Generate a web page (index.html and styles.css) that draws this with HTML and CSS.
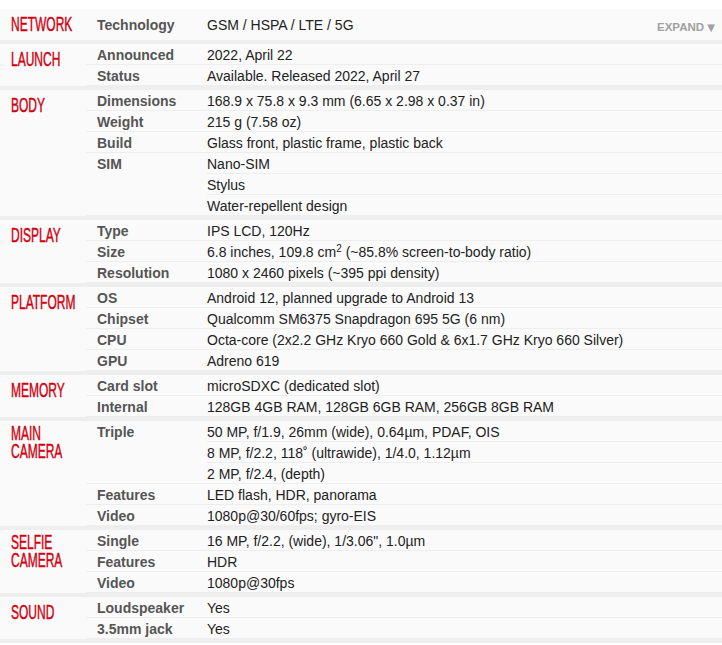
FILE: index.html
```html
<!DOCTYPE html>
<html lang="en">
<head>
<meta charset="utf-8">
<title>Specs</title>
<link rel="stylesheet" href="styles.css">
</head>
<body>
<div class="specs-list">
  <section class="sec net">
    <h2 class="ttl"><span>NETWORK</span></h2>
    <div class="rows">
      <div class="spec">
        <div class="lbl">Technology</div>
        <div class="vals"><div class="val">GSM / HSPA / LTE / 5G</div></div>
        <a class="expand">EXPAND <span class="arr">▼</span></a>
      </div>
    </div>
  </section>

  <section class="sec">
    <h2 class="ttl"><span>LAUNCH</span></h2>
    <div class="rows">
      <div class="spec"><div class="lbl">Announced</div><div class="vals"><div class="val">2022, April 22</div></div></div>
      <div class="spec"><div class="lbl">Status</div><div class="vals"><div class="val">Available. Released 2022, April 27</div></div></div>
    </div>
  </section>

  <section class="sec">
    <h2 class="ttl"><span>BODY</span></h2>
    <div class="rows">
      <div class="spec"><div class="lbl">Dimensions</div><div class="vals"><div class="val">168.9 x 75.8 x 9.3 mm (6.65 x 2.98 x 0.37 in)</div></div></div>
      <div class="spec"><div class="lbl">Weight</div><div class="vals"><div class="val">215 g (7.58 oz)</div></div></div>
      <div class="spec"><div class="lbl">Build</div><div class="vals"><div class="val">Glass front, plastic frame, plastic back</div></div></div>
      <div class="spec"><div class="lbl">SIM</div><div class="vals">
        <div class="val">Nano-SIM</div>
        <div class="val">Stylus</div>
        <div class="val">Water-repellent design</div>
      </div></div>
    </div>
  </section>

  <section class="sec">
    <h2 class="ttl"><span>DISPLAY</span></h2>
    <div class="rows">
      <div class="spec"><div class="lbl">Type</div><div class="vals"><div class="val">IPS LCD, 120Hz</div></div></div>
      <div class="spec"><div class="lbl">Size</div><div class="vals"><div class="val">6.8 inches, 109.8 cm<sup>2</sup> (~85.8% screen-to-body ratio)</div></div></div>
      <div class="spec"><div class="lbl">Resolution</div><div class="vals"><div class="val">1080 x 2460 pixels (~395 ppi density)</div></div></div>
    </div>
  </section>

  <section class="sec">
    <h2 class="ttl"><span>PLATFORM</span></h2>
    <div class="rows">
      <div class="spec"><div class="lbl">OS</div><div class="vals"><div class="val">Android 12, planned upgrade to Android 13</div></div></div>
      <div class="spec"><div class="lbl">Chipset</div><div class="vals"><div class="val">Qualcomm SM6375 Snapdragon 695 5G (6 nm)</div></div></div>
      <div class="spec"><div class="lbl">CPU</div><div class="vals"><div class="val">Octa-core (2x2.2 GHz Kryo 660 Gold &amp; 6x1.7 GHz Kryo 660 Silver)</div></div></div>
      <div class="spec"><div class="lbl">GPU</div><div class="vals"><div class="val">Adreno 619</div></div></div>
    </div>
  </section>

  <section class="sec">
    <h2 class="ttl"><span>MEMORY</span></h2>
    <div class="rows">
      <div class="spec"><div class="lbl">Card slot</div><div class="vals"><div class="val">microSDXC (dedicated slot)</div></div></div>
      <div class="spec"><div class="lbl">Internal</div><div class="vals"><div class="val">128GB 4GB RAM, 128GB 6GB RAM, 256GB 8GB RAM</div></div></div>
    </div>
  </section>

  <section class="sec">
    <h2 class="ttl two"><span>MAIN<br>CAMERA</span></h2>
    <div class="rows">
      <div class="spec"><div class="lbl">Triple</div><div class="vals">
        <div class="val">50 MP, f/1.9, 26mm (wide), 0.64µm, PDAF, OIS</div>
        <div class="val">8 MP, f/2.2, 118˚ (ultrawide), 1/4.0, 1.12µm</div>
        <div class="val">2 MP, f/2.4, (depth)</div>
      </div></div>
      <div class="spec"><div class="lbl">Features</div><div class="vals"><div class="val">LED flash, HDR, panorama</div></div></div>
      <div class="spec"><div class="lbl">Video</div><div class="vals"><div class="val">1080p@30/60fps; gyro-EIS</div></div></div>
    </div>
  </section>

  <section class="sec">
    <h2 class="ttl two"><span>SELFIE<br>CAMERA</span></h2>
    <div class="rows">
      <div class="spec"><div class="lbl">Single</div><div class="vals"><div class="val">16 MP, f/2.2, (wide), 1/3.06", 1.0µm</div></div></div>
      <div class="spec"><div class="lbl">Features</div><div class="vals"><div class="val">HDR</div></div></div>
      <div class="spec"><div class="lbl">Video</div><div class="vals"><div class="val">1080p@30fps</div></div></div>
    </div>
  </section>

  <section class="sec">
    <h2 class="ttl"><span>SOUND</span></h2>
    <div class="rows">
      <div class="spec"><div class="lbl">Loudspeaker</div><div class="vals"><div class="val">Yes</div></div></div>
      <div class="spec"><div class="lbl">3.5mm jack</div><div class="vals"><div class="val">Yes</div></div></div>
    </div>
  </section>
</div>
</body>
</html>
```

FILE: styles.css
```css
html, body {
  margin: 0;
  padding: 0;
  background: #fff;
}

body {
  font-family: "Liberation Sans", Arial, sans-serif;
}

.specs-list {
  padding-top: 9px;
}

.sec {
  display: flex;
  background: #fafafa;
  border-bottom: 4px solid #eee;
}

.ttl {
  width: 86px;
  flex: none;
  margin: 0;
  padding: 5px 0 0 11px;
  box-sizing: border-box;
  font-family: "Liberation Sans", Arial, sans-serif;
  font-size: 20px;
  line-height: 21px;
  font-weight: normal;
}

.ttl span {
  display: block;
  width: 120px;
  font-size: 20px;
  line-height: 21px;
  font-weight: normal;
  color: #d00010;
  -webkit-text-stroke: 0.45px #d00010;
  transform: scaleX(0.6);
  transform-origin: 0 0;
  white-space: nowrap;
}

.ttl.two {
  padding-top: 3px;
}

.ttl.two span {
  line-height: 18px;
}

.rows {
  flex: 1;
  min-width: 0;
}

.spec {
  display: flex;
  border-bottom: 1px solid #eee;
}

.lbl {
  width: 121px;
  flex: none;
  box-sizing: border-box;
  padding: 2px 0 0 11px;
  font-size: 14px;
  line-height: 18px;
  font-weight: bold;
  color: #555;
  white-space: nowrap;
}

.vals {
  flex: 1;
  min-width: 0;
}

.val {
  padding-top: 2px;
  font-size: 14px;
  line-height: 18px;
  color: #222;
  white-space: nowrap;
  border-bottom: 1px solid #eee;
}

.val:last-child {
  border-bottom: 0;
}

.val sup {
  font-size: 10px;
  line-height: 0;
  vertical-align: 5px;
}

.net .spec {
  padding: 5px 0 6px;
  border-bottom: 0;
  height: 31px;
  box-sizing: border-box;
}

.expand {
  flex: none;
  margin-top: 3px;
  padding-right: 7px;
  font-size: 11.5px;
  line-height: 20px;
  font-weight: bold;
  color: #a0a0a0;
  cursor: pointer;
}

.expand .arr {
  font-family: "DejaVu Sans", sans-serif;
  font-size: 10px;
}
```
